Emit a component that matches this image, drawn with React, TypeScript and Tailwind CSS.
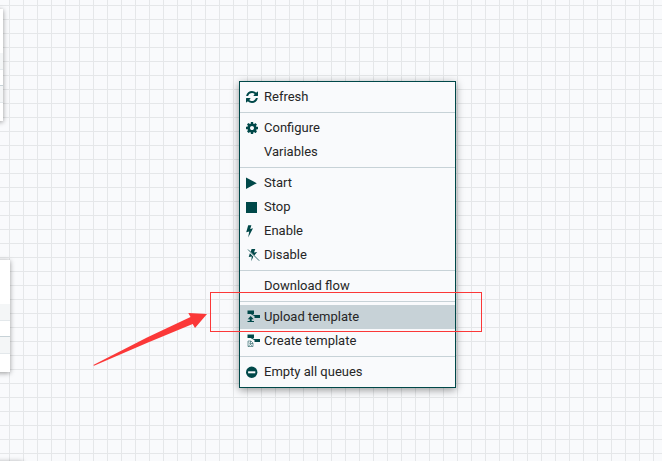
import type { ReactNode } from "react";

const ICON = "block overflow-visible fill-[#004849]";

const Refresh = () => (
  <svg className={ICON} width="12" height="14" viewBox="0 0 1536 1792">
    <path d="M1511 1056q0 5-1 7-64 268-268 434.5t-478 166.5q-146 0-282.5-55t-243.5-157l-129 129q-19 19-45 19t-45-19-19-45v-448q0-26 19-45t45-19h448q26 0 45 19t19 45-19 45l-137 137q71 66 161 102t187 36q134 0 250-65t186-179q11-17 53-117 8-23 30-23h192q13 0 22.5 9.5t9.5 22.5zm25-800v448q0 26-19 45t-45 19h-448q-26 0-45-19t-19-45 19-45l138-138q-148-137-349-137-134 0-250 65t-186 179q-11 17-53 117-8 23-30 23h-199q-13 0-22.5-9.5t-9.5-22.5v-7q65-268 270-434.5t480-166.5q146 0 284 55.5t245 156.5l130-129q19-19 45-19t45 19 19 45z" />
  </svg>
);

const Gear = () => (
  <svg className={ICON} width="12" height="14" viewBox="0 0 1536 1792">
    <path d="M1024 896q0-106-75-181t-181-75-181 75-75 181 75 181 181 75 181-75 75-181zm512-109v222q0 12-8 23t-20 13l-185 28q-19 54-39 91 35 50 107 138 10 12 10 25t-9 23q-27 37-99 108t-94 71q-12 0-26-9l-138-108q-44 23-91 38-16 136-29 186-7 28-36 28h-222q-14 0-24.5-8.5t-11.5-21.5l-28-184q-49-16-90-37l-141 107q-10 9-25 9-14 0-25-11-126-114-165-168-7-10-7-23 0-12 8-23 15-21 51-66.5t54-70.5q-27-50-41-99l-183-27q-13-2-21-12.5t-8-23.5v-222q0-12 8-23t19-13l186-28q14-46 39-92-40-57-107-138-10-12-10-24 0-10 9-23 26-36 98.500-107.500t94.500-71.500q13 0 26 10l138 107q44-23 91-38 16-136 29-186 7-28 36-28h222q14 0 24.500 8.500t11.500 21.500l28 184q49 16 90 37l142-107q9-9 24-9 13 0 25 10 129 119 165 170 7 8 7 22 0 12-8 23-15 21-51 66.500t-54 70.500q26 50 41 98l183 28q13 2 21 12.500t8 23.500z" />
  </svg>
);

const Play = () => (
  <svg className={ICON} width="14" height="14" viewBox="0 0 14 14">
    <path d="M0 1.500 10.800 7.200 0 12.900z" />
  </svg>
);

const Stop = () => (
  <svg className={ICON} width="14" height="14" viewBox="0 0 14 14">
    <path d="M0 2h11v11H0z" />
  </svg>
);

const Bolt = () => (
  <svg className={ICON} width="14" height="14" viewBox="0 0 14 14">
    <path d="M2.200 1.300H5.400L4.200 4.900 7 4.200 2.200 13.500 3.200 7.500.200 8.200z" />
  </svg>
);

const BoltOff = () => (
  <svg className={ICON} width="14" height="14" viewBox="0 0 14 14">
    <path d="M5.600 1H9.300L8 4.500 11.200 4 8.300 7.600 4.700 3.800zM3.900 5.300 7.300 8.700 5.200 13.200 5.800 8.500 2.700 8.900z" />
    <path d="M2 1.500 13.200 12.700" stroke="#004849" strokeWidth=".8" />
  </svg>
);

const UploadTemplate = () => (
  <svg className={ICON} width="14" height="14" viewBox="0 0 14 14">
    <path d="M1.500 .500h6.500V4H1.500zM8.500 5H14v3H8.500zM6 3.800l3 1.700v.900L4.600 4z" />
    <path d="M4.700 6 7.700 9.300H5.700V11H8v1H1.500v-1h2.200V9.300H1.700z" />
  </svg>
);

const CreateTemplate = () => (
  <svg className={ICON} width="14" height="14" viewBox="0 0 14 14">
    <path d="M1.500 .500h6.500V4H1.500zM8.500 5H14v3H8.500zM6 3.800l3 1.700v.900L4.600 4z" />
    <path
      d="M2 7h3l2 2v3.500H2zM4.500 7v2.500H7M3 8.500l3 3.500M2.500 12l2-1.500"
      fill="none"
      stroke="#004849"
      strokeOpacity=".65"
      strokeWidth=".8"
    />
  </svg>
);

const Minus = () => (
  <svg className={ICON} width="12" height="14" viewBox="0 0 12 14">
    <circle cx="5.700" cy="7.300" r="5.700" />
    <path d="M2.100 6.300h7.200v2H2.100z" fill="#f9fafc" />
  </svg>
);

type Item = { label: string; icon?: ReactNode; active?: boolean };

const groups: Item[][] = [
  [{ label: "Refresh", icon: <Refresh /> }],
  [{ label: "Configure", icon: <Gear /> }, { label: "Variables" }],
  [
    { label: "Start", icon: <Play /> },
    { label: "Stop", icon: <Stop /> },
    { label: "Enable", icon: <Bolt /> },
    { label: "Disable", icon: <BoltOff /> },
  ],
  [{ label: "Download flow" }],
  [
    { label: "Upload template", icon: <UploadTemplate />, active: true },
    { label: "Create template", icon: <CreateTemplate /> },
  ],
  [{ label: "Empty all queues", icon: <Minus /> }],
];

const ContextMenu = () => (
  <div className="absolute left-[239px] top-[81px] w-[217px] border border-[#004849] bg-[#f9fafc]/97 shadow-[0_2px_8px_rgba(0,0,0,0.4)]">
    {groups.map((items, i) => (
      <div key={i} className="border-b border-[#c7d2d7] py-[3px] last:border-b-0">
        {items.map((item) => (
          <div
            key={item.label}
            className={item.active ? "flex h-6 items-center bg-[#c7d2d7] pl-1.5" : "flex h-6 items-center pl-1.5"}
          >
            <span className="w-[18px] shrink-0">{item.icon}</span>
            <span className="text-[13px] leading-6 text-[#262626]">{item.label}</span>
          </div>
        ))}
      </div>
    ))}
  </div>
);

const Processor = ({ place }: { place: string }) => (
  <div className={`absolute h-[112px] bg-white shadow-[0_1px_5px_rgba(0,0,0,0.4)] ${place}`}>
    <div className="h-11" />
    <div className="h-[17px] border-b border-[#e3e8eb] bg-[#f4f6f7]" />
    <div className="h-4 border-b border-[#c7d2d7]" />
    <div className="h-[17px] border-b border-[#e3e8eb] bg-[#f4f6f7]" />
  </div>
);

export default function App() {
  return (
    <main
      className="relative h-[461px] w-[662px] overflow-hidden bg-[#f9fafc] bg-[linear-gradient(to_right,#e5e7e9_1px,transparent_1px),linear-gradient(to_bottom,#e5e7e9_1px,transparent_1px)] bg-[length:14px_14px] bg-[position:9px_5px]"
      style={{ fontFamily: 'Roboto, "Liberation Sans", sans-serif' }}
    >
      <Processor place="-left-[200px] top-[9px] w-[203px]" />
      <Processor place="-left-[200px] top-[260px] w-[210px]" />
      <Processor place="-left-[200px] top-[461px] w-[223px]" />
      <ContextMenu />
      <div className="absolute left-[210px] top-[292px] h-10 w-[272px] border border-[#fb3838]" />
      <svg className="absolute left-[80px] top-[300px]" width="140" height="80" viewBox="80 300 140 80">
        <path d="M93.300 365 147 337.500 190.500 317 188.300 313 207 314 195 328 192.700 324 148 342.500 94 365.800z" fill="#fb3838" />
      </svg>
    </main>
  );
}
